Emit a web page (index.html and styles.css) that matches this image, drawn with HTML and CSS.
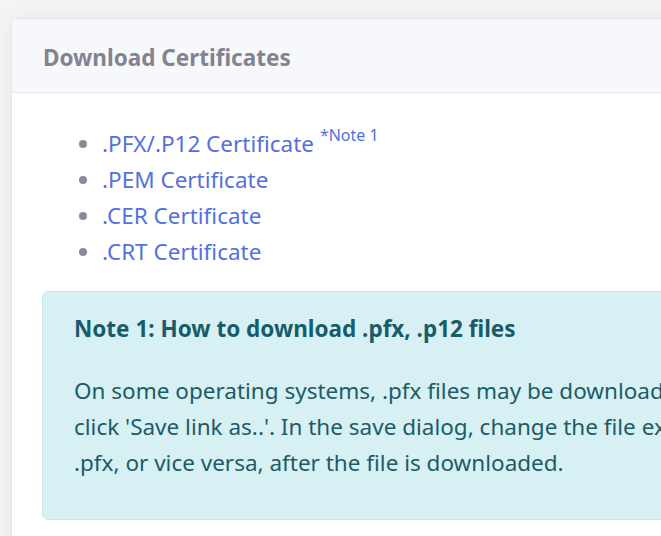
FILE: index.html
```html
<!DOCTYPE html>
<html lang="en">
<head>
<meta charset="utf-8">
<title>Download Certificates</title>
<link rel="stylesheet" href="styles.css">
</head>
<body>
<div class="page">
  <section class="card">
    <header class="card-header">Download Certificates</header>
    <div class="card-body">
      <ul class="cert-list">
        <li><a href="#">.PFX/.P12 Certificate</a> <sup class="note-ref">*Note 1</sup></li>
        <li><a href="#">.PEM Certificate</a></li>
        <li><a href="#">.CER Certificate</a></li>
        <li><a href="#">.CRT Certificate</a></li>
      </ul>
      <div class="alert">
        <h4 class="alert-title">Note 1: How to download .pfx, .p12 files</h4>
        <p class="alert-text">On some operating systems, .pfx files may be downloaded as .p12 files. To fix this, right<br>click 'Save link as..'. In the save dialog, change the file extension from .p12 to<br>.pfx, or vice versa, after the file is downloaded.</p>
      </div>
    </div>
  </section>
</div>
</body>
</html>
```
FILE: styles.css
```css
html, body {
  margin: 0;
  padding: 0;
}
body {
  background: #f4f4f5;
  font-family: "Noto Sans", "Open Sans", sans-serif;
  overflow: hidden;
  width: 661px;
  height: 536px;
}
.page {
  padding: 18px 0 0 11px;
}
.card {
  width: 1200px;
  background: #ffffff;
  border: 1px solid #e2e5ef;
  border-radius: 6px;
  box-shadow: 0 0 24px rgba(0, 0, 0, 0.05);
  overflow: hidden;
}
.card-header {
  background: #f7f8fc;
  border-bottom: 1px solid #e1e5ef;
  height: 74px;
  box-sizing: border-box;
  padding: 3px 31px 0 31px;
  display: flex;
  align-items: center;
  font-size: 22.5px;
  font-weight: 700;
  color: #83828f;
}
.card-body {
  padding: 33px 30px 30px 30px;
}
.cert-list {
  margin: 0;
  padding: 0 0 0 60px;
  font-size: 22.5px;
  line-height: 36px;
  color: #8a8a99;
}
.cert-list a {
  color: #5370e0;
  text-decoration: none;
}
.note-ref {
  color: #5370e0;
  font-size: 16px;
  line-height: 0;
  vertical-align: 0;
  position: relative;
  top: -11px;
}
.alert {
  margin-top: 21px;
  background: #d7f0f4;
  border: 1px solid #c6e8ee;
  border-radius: 6px;
  padding: 22px 31px 30px 31px;
  color: #1d5b68;
  height: 229px;
  box-sizing: border-box;
}
.alert-title {
  margin: 0;
  font-size: 22.5px;
  font-weight: 700;
  line-height: 30px;
  color: #175c6a;
}
.alert-text {
  margin: 29px 0 0 0;
  font-size: 22.5px;
  line-height: 36px;
}
```
